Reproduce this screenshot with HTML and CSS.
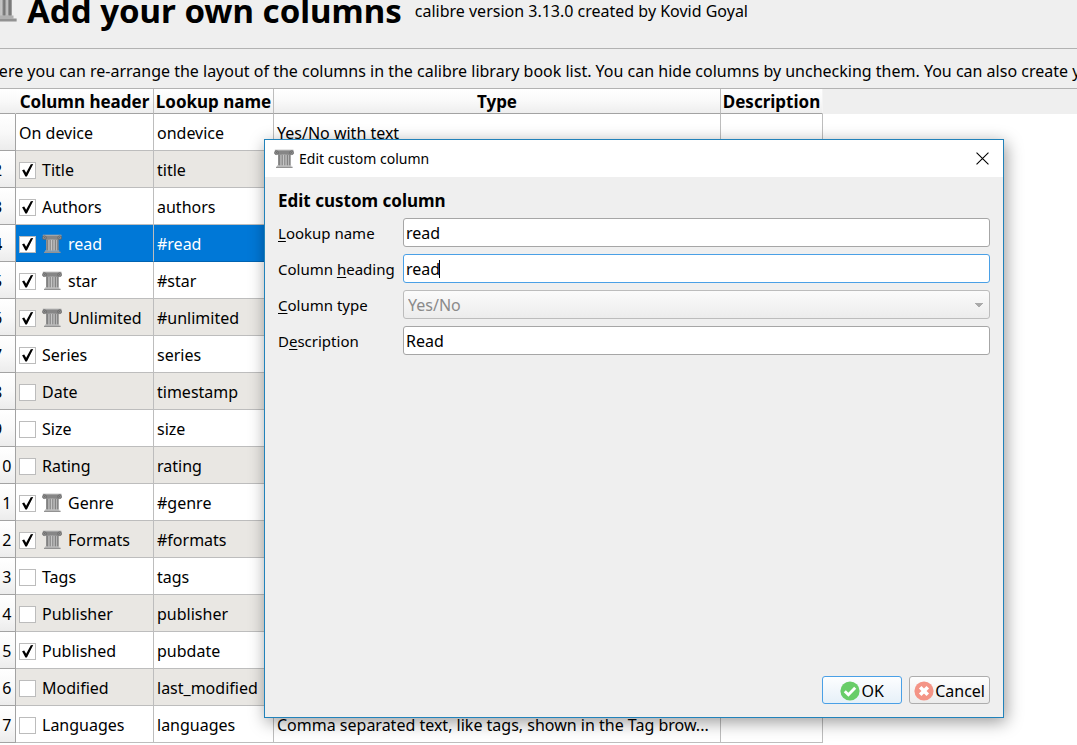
FILE: index.html
```
<!DOCTYPE html>
<html lang="en">
<head>
<meta charset="utf-8">
<title>Add your own columns</title>
<link rel="stylesheet" href="styles.css">
</head>
<body>
<svg class="defs" aria-hidden="true">
  <defs>
    <linearGradient id="shaft" x1="0" x2="1" y1="0" y2="0">
      <stop offset="0" stop-color="#8a8a8a"/><stop offset=".45" stop-color="#bdbdbd"/><stop offset="1" stop-color="#8a8a8a"/>
    </linearGradient>
    <symbol id="pillar" viewBox="0 0 20 20">
      <path d="M4 4.6h12.6v12H4z" fill="url(#shaft)"/>
      <path d="M5.6 6v10.600M8.200 6v10.600M10.800 6v10.600M13.400 6v10.600M15.800 6v10.600" stroke="#777" stroke-width=".8"/>
      <path d="M6.900 6v10.600M9.500 6v10.600M12.100 6v10.600M14.600 6v10.600" stroke="#cdcdcd" stroke-width=".6"/>
      <path d="M1 .9h18.200v2.600L16.600 5.400H4L1 3.500z" fill="#868686"/>
      <path d="M.8.700h18.600v1.200H.8z" fill="#a8a8a8"/>
      <circle cx="2.400" cy="3.700" r="1.900" fill="#8e8e8e" stroke="#606060" stroke-width=".7"/>
      <circle cx="17.700" cy="3.700" r="1.900" fill="#8e8e8e" stroke="#606060" stroke-width=".7"/>
      <path d="M2.200 3.700h.6M17.300 3.700h.6" stroke="#3c3c3c" stroke-width=".8"/>
      <path d="M3 16.500h14.300v1.200H3z" fill="#b0b0b0"/>
      <path d="M2 17.700h16.600v1.300H2z" fill="#929292"/>
    </symbol>
  </defs>
</svg>

<main class="page">
  <header class="banner">
    <svg class="banner-icon" aria-hidden="true"><use href="#pillar"/></svg>
    <h1>Add your own columns</h1>
    <span>calibre version 3.13.0 created by Kovid Goyal</span>
  </header>
  <p class="intro">Here you can re-arrange the layout of the columns in the calibre library book list. You can hide columns by unchecking them. You can also create your own columns.</p>

  <div class="grid">
    <table>
      <colgroup><col class="c-num"><col class="c-head"><col class="c-lookup"><col class="c-type"><col class="c-desc"></colgroup>
      <thead>
        <tr><th></th><th>Column header</th><th>Lookup name</th><th>Type</th><th>Description</th></tr>
      </thead>
      <tbody>
        <tr><th>1</th><td>On device</td><td>ondevice</td><td>Yes/No with text</td><td></td></tr>
        <tr><th>2</th><td><label><input type="checkbox" checked>Title</label></td><td>title</td><td></td><td></td></tr>
        <tr><th>3</th><td><label><input type="checkbox" checked>Authors</label></td><td>authors</td><td></td><td></td></tr>
        <tr class="selected"><th>4</th><td><label><input type="checkbox" checked><svg class="icon"><use href="#pillar"/></svg>read</label></td><td>#read</td><td></td><td></td></tr>
        <tr><th>5</th><td><label><input type="checkbox" checked><svg class="icon"><use href="#pillar"/></svg>star</label></td><td>#star</td><td></td><td></td></tr>
        <tr><th>6</th><td><label><input type="checkbox" checked><svg class="icon"><use href="#pillar"/></svg>Unlimited</label></td><td>#unlimited</td><td></td><td></td></tr>
        <tr><th>7</th><td><label><input type="checkbox" checked>Series</label></td><td>series</td><td></td><td></td></tr>
        <tr><th>8</th><td><label><input type="checkbox">Date</label></td><td>timestamp</td><td></td><td></td></tr>
        <tr><th>9</th><td><label><input type="checkbox">Size</label></td><td>size</td><td></td><td></td></tr>
        <tr><th>10</th><td><label><input type="checkbox">Rating</label></td><td>rating</td><td></td><td></td></tr>
        <tr><th>11</th><td><label><input type="checkbox" checked><svg class="icon"><use href="#pillar"/></svg>Genre</label></td><td>#genre</td><td></td><td></td></tr>
        <tr><th>12</th><td><label><input type="checkbox" checked><svg class="icon"><use href="#pillar"/></svg>Formats</label></td><td>#formats</td><td></td><td></td></tr>
        <tr><th>13</th><td><label><input type="checkbox">Tags</label></td><td>tags</td><td></td><td></td></tr>
        <tr><th>14</th><td><label><input type="checkbox">Publisher</label></td><td>publisher</td><td></td><td></td></tr>
        <tr><th>15</th><td><label><input type="checkbox" checked>Published</label></td><td>pubdate</td><td></td><td></td></tr>
        <tr><th>16</th><td><label><input type="checkbox">Modified</label></td><td>last_modified</td><td></td><td></td></tr>
        <tr><th>17</th><td><label><input type="checkbox">Languages</label></td><td>languages</td><td>Comma separated text, like tags, shown in the Tag brow...</td><td></td></tr>
      </tbody>
    </table>
  </div>
</main>

<section class="dialog" role="dialog" aria-labelledby="dialog-title">
  <div class="titlebar">
    <svg class="icon" aria-hidden="true"><use href="#pillar"/></svg>
    <span id="dialog-title">Edit custom column</span>
    <button class="close" type="button" aria-label="Close"><svg viewBox="0 0 12 12"><path d="M.5.5l11 11M11.5.5l-11 11" stroke="#000" stroke-width="1"/></svg></button>
  </div>
  <form class="content">
    <h2>Edit custom column</h2>
    <div class="fields">
      <label for="lookup"><u>L</u>ookup name</label>
      <input id="lookup" type="text" value="read">
      <label for="heading">Column <u>h</u>eading</label>
      <div class="focused"><input id="heading" type="text" value="read"><i class="caret"></i></div>
      <label for="type"><u>C</u>olumn type</label>
      <select id="type" disabled><option>Yes/No</option></select>
      <label for="desc">D<u>e</u>scription</label>
      <input id="desc" type="text" value="Read">
    </div>
    <div class="actions">
      <button class="default" type="button"><svg viewBox="0 0 20 20"><circle cx="10" cy="10" r="9.6" fill="#68cd68"/><path d="M4.8 10.2l3.6 3.5 6.8-6.9" fill="none" stroke="#fff" stroke-width="2.9"/></svg>OK</button>
      <button type="button"><svg viewBox="0 0 20 20"><circle cx="10" cy="10" r="9.6" fill="#f49486"/><path d="M6.2 6.2l7.6 7.6M13.8 6.2l-7.6 7.6" fill="none" stroke="#fff" stroke-width="3.6"/></svg>Cancel</button>
    </div>
  </form>
</section>
</body>
</html>
```
FILE: styles.css
```
* { box-sizing: border-box; }

body {
  margin: 0;
  min-height: 100vh;
  overflow: hidden;
  background: #efefef;
  color: #000;
  font: 16px/22px "Noto Sans", "Open Sans", sans-serif;
}

.defs { display: block; width: 0; height: 0; }

/* The window is scrolled slightly down and to the right. */
.page { margin: -24px 0 0 -28px; }

.banner {
  display: flex;
  align-items: center;
  height: 73px;
  padding-bottom: 2px;
  border-bottom: 1px solid #b2b2b2;
  white-space: nowrap;
}
.banner-icon { width: 48px; height: 48px; align-self: flex-start; }
h1 { margin: 0 13px 0 7px; font-size: 33px; line-height: 40px; }

.intro {
  margin: 0;
  padding: 11px 0 6px 15px;
  overflow: hidden;
  white-space: nowrap;
}

.grid {
  margin-left: 17px;
  min-height: 657px;
  border-top: 1px solid #b2b2b2;
  background: linear-gradient(#efefef 25px, #fff 25px);
}

table { width: 834px; table-layout: fixed; border-collapse: separate; border-spacing: 0; }
.c-num { width: 27px; }
.c-head { width: 138px; }
.c-lookup { width: 120px; }
.c-type { width: 447px; }
.c-desc { width: 102px; }

th, td {
  padding: 2px 3px 0;
  border-right: 1px solid #bdbdbd;
  border-bottom: 1px solid #bdbdbd;
  text-align: left;
  white-space: nowrap;
}
thead th {
  height: 25px;
  padding: 2px 0 0;
  border-bottom-color: #a3a3a3;
  background: linear-gradient(#fff, #f9f9f9 50%, #eee);
  font-size: 17px;
  text-align: center;
}
thead th:first-child { border-right-color: transparent; }
thead th:last-child { border-right-color: #f4f4f4; }
tbody th {
  padding: 2px 4px 0;
  border-color: #a3a3a3;
  background: linear-gradient(#fff, #f9f9f9 50%, #ececec);
  font-weight: 400;
}
tbody td { height: 37px; background: #fff; }
tbody tr:nth-child(even) td { background: #e9e7e3; }
tbody tr.selected td { background: #0078d7; color: #fff; border-bottom-color: #0063b1; }
tbody tr.selected th { font-weight: 700; }

td label { display: flex; align-items: center; gap: 6px; }
.icon { flex: none; width: 20px; height: 20px; }

input[type="checkbox"] {
  appearance: none;
  flex: none;
  width: 17px;
  height: 17px;
  margin: 0;
  border: 1px solid #bcbcbc;
  background: #fff;
}
input[type="checkbox"]:checked::before {
  content: "";
  display: block;
  width: 15px;
  height: 15px;
  background: #000;
  clip-path: polygon(14% 52%, 28% 46%, 41% 68%, 72% 12%, 88% 10%, 46% 93%, 36% 93%);
}

.dialog {
  position: absolute;
  top: 139px;
  left: 264px;
  display: flex;
  flex-direction: column;
  width: 740px;
  min-height: 579px;
  border: 1px solid #2182ba;
  background: #efefef;
  box-shadow: 2px 4px 16px rgba(0, 0, 0, .4);
}
.titlebar {
  display: flex;
  align-items: center;
  gap: 5px;
  height: 37px;
  padding: 0 14px 0 9px;
  background: #fff;
  font-size: 14px;
}
.close {
  margin-left: auto;
  padding: 0;
  border: 0;
  background: none;
}
.close svg { display: block; width: 13px; height: 13px; }

.content {
  flex: 1;
  display: flex;
  flex-direction: column;
  padding: 13px;
}
h2 { margin: 0 0 6px; font-size: 17px; line-height: 22px; }
.fields {
  display: grid;
  grid-template-columns: 118px 1fr;
  gap: 7px;
  align-items: center;
}
.fields label { font-size: 15px; white-space: nowrap; }
u { text-underline-offset: 2px; }

.fields input,
.fields select {
  display: block;
  width: 100%;
  height: 29px;
  margin: 0;
  padding: 0 2px;
  border: 1px solid #a6a6a6;
  border-radius: 3px;
  outline: 0;
  background: #fff;
  color: #000;
  font: inherit;
}
.fields select {
  appearance: none;
  padding: 0 4px;
  border-color: #bcbcbc;
  background:
    conic-gradient(from -45deg at 50% 100%, #aaa 90deg, transparent 0) no-repeat right 6px center / 8px 4px,
    linear-gradient(#fbfbfb, #ececec);
  background:
    conic-gradient(from -45deg at 50% 100%, #aaa 90deg, transparent 0) no-repeat right 6px center / 8px 4px,
    linear-gradient(#fbfbfb, #ececec);
  color: #8a8a8a;
  opacity: 1;
}
.focused { position: relative; }
.focused input { border-color: #4aa0e6; }
.caret {
  position: absolute;
  top: 6px;
  left: 36px;
  width: 1px;
  height: 18px;
  background: #000;
}

.actions {
  display: flex;
  justify-content: flex-end;
  gap: 7px;
  margin-top: auto;
}
.actions button {
  display: flex;
  align-items: center;
  justify-content: center;
  gap: 1px;
  min-width: 80px;
  height: 28px;
  padding: 1px 4px 0;
  border: 1px solid #adadad;
  border-radius: 3px;
  background: linear-gradient(#fefefe, #ececec);
  color: #000;
  font: inherit;
}
.actions .default {
  border-color: #4aa0e6;
  background: linear-gradient(#fdfeff, #e6f0f8);
}
.actions svg { width: 20px; height: 20px; }
```
